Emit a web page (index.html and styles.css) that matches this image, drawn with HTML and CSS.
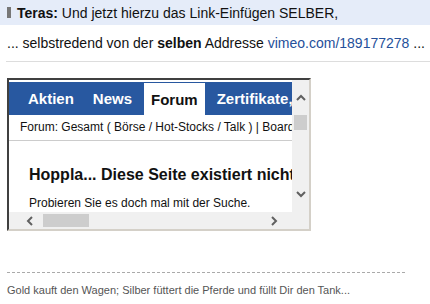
FILE: index.html
```html
<!DOCTYPE html>
<html lang="de">
<head>
  <meta charset="UTF-8">
  <title>Forum Beitrag</title>
  <link rel="stylesheet" href="styles.css">
</head>
<body>
  <div class="post">
    <div class="quote"><span class="quote-bar"></span><b>Teras:</b>&nbsp;Und jetzt hierzu das Link-Einfügen SELBER,</div>
    <p class="line">... selbstredend von der <b>selben</b> Addresse <a href="#">vimeo.com/189177278</a> ...</p>
    <hr class="sep">

    <div class="frame">
      <div class="pane">
        <div class="nav">
          <span class="nav-item">Aktien</span>
          <span class="nav-item">News</span>
          <span class="nav-item active">Forum</span>
          <span class="nav-item">Zertifikate,</span>
        </div>
        <div class="crumbs">Forum: Gesamt ( Börse / Hot-Stocks / Talk ) | Boards</div>
        <h2 class="oops">Hoppla... Diese Seite existiert nicht</h2>
        <p class="hint">Probieren Sie es doch mal mit der Suche.</p>
      </div>

      <div class="vbar">
        <svg class="arrow" width="12" height="8" viewBox="0 0 12 8"><polyline points="2,6 6,2 10,6" /></svg>
        <div class="vthumb"></div>
        <div class="fill"></div>
        <svg class="arrow" width="12" height="8" viewBox="0 0 12 8"><polyline points="2,2 6,6 10,2" /></svg>
      </div>

      <div class="hbar">
        <svg class="arrow" width="8" height="12" viewBox="0 0 8 12"><polyline points="6,2 2,6 6,10" /></svg>
        <div class="hthumb"></div>
        <div class="fill"></div>
        <svg class="arrow" width="8" height="12" viewBox="0 0 8 12"><polyline points="2,2 6,6 2,10" /></svg>
      </div>
      <div class="corner"></div>
    </div>

    <div class="sig">
      <div class="sig-line"></div>
      <p class="sig-text">Gold kauft den Wagen; Silber füttert die Pferde und füllt Dir den Tank...</p>
    </div>
  </div>
</body>
</html>
```

FILE: styles.css
```css
/* General */
body {
  margin: 0;
  background: #fff;
  font-family: 'Liberation Sans', Arial, sans-serif;
  font-size: 14px;
  color: #111;
}

/* Quote + text */
.quote {
  display: flex;
  align-items: center;
  height: 25px;
  padding-left: 7px;
  background: #e5ecf9;
  white-space: nowrap;
}

.quote-bar {
  width: 4px;
  height: 11px;
  margin-right: 6px;
  background: #777;
}

.line {
  margin: 8px 0 0;
  padding-left: 7px;
  line-height: 20px;
  white-space: nowrap;
}

.line a {
  color: #25509a;
  text-decoration: none;
}

.sep {
  margin: 8px 0 0 6px;
  border: 0;
  border-top: 1px solid #ddd;
}

/* Embedded frame */
.frame {
  box-sizing: border-box;
  width: 304px;
  height: 153px;
  margin: 16px 0 0 7px;
  display: grid;
  grid-template-columns: 283px 17px;
  grid-template-rows: 132px 17px;
  border: 2px solid;
  border-color: #404040 #d4d0c8 #d4d0c8 #404040;
}

.pane {
  overflow: hidden;
  padding-top: 2px;
  background: #fff;
}

.nav {
  display: flex;
  height: 33px;
  padding-left: 12px;
  gap: 5px;
  background: #2858a0;
  white-space: nowrap;
}

.nav-item {
  display: flex;
  align-items: center;
  padding: 0 7px;
  color: #fff;
  font-weight: bold;
  font-size: 15px;
}

.nav-item.active {
  margin-top: 1px;
  background: #fff;
  color: #111;
}

.crumbs {
  height: 25px;
  line-height: 25px;
  padding-left: 11px;
  border-bottom: 1px solid #ccc;
  font-size: 12px;
  white-space: nowrap;
}

.oops {
  margin: 24px 0 0 20px;
  font-size: 16px;
  line-height: 20px;
  white-space: nowrap;
}

.hint {
  margin: 10px 0 0 20px;
  font-size: 12px;
  line-height: 16px;
}

/* Scrollbars */
.vbar, .hbar {
  display: flex;
  align-items: center;
  background: #f0f0f0;
}

.vbar {
  flex-direction: column;
  padding: 14px 0 14px;
}

.hbar {
  padding: 0 14px 0 17px;
}

.vthumb {
  width: 13px;
  height: 15px;
  margin-top: 13px;
  background: #cdcdcd;
}

.hthumb {
  width: 46px;
  height: 13px;
  margin-left: 9px;
  background: #cdcdcd;
}

.fill {
  flex: 1;
}

.arrow polyline {
  fill: none;
  stroke: #606060;
  stroke-width: 2;
}

.corner {
  background: #f0f0f0;
}

/* Signature */
.sig {
  margin: 41px 0 0 7px;
}

.sig-line {
  width: 398px;
  border-top: 1px dashed #aaa;
}

.sig-text {
  margin: 10px 0 0;
  font-size: 11px;
  line-height: 14px;
  color: #555;
}
```
